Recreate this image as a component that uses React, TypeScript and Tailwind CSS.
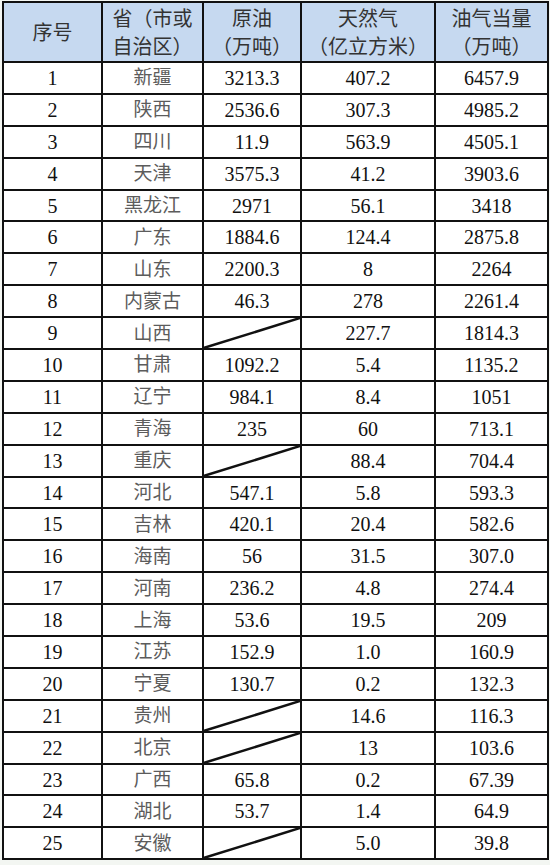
const rows: [string, string, string | null, string, string][] = [
  ['1', '新疆', '3213.3', '407.2', '6457.9'],
  ['2', '陕西', '2536.6', '307.3', '4985.2'],
  ['3', '四川', '11.9', '563.9', '4505.1'],
  ['4', '天津', '3575.3', '41.2', '3903.6'],
  ['5', '黑龙江', '2971', '56.1', '3418'],
  ['6', '广东', '1884.6', '124.4', '2875.8'],
  ['7', '山东', '2200.3', '8', '2264'],
  ['8', '内蒙古', '46.3', '278', '2261.4'],
  ['9', '山西', null, '227.7', '1814.3'],
  ['10', '甘肃', '1092.2', '5.4', '1135.2'],
  ['11', '辽宁', '984.1', '8.4', '1051'],
  ['12', '青海', '235', '60', '713.1'],
  ['13', '重庆', null, '88.4', '704.4'],
  ['14', '河北', '547.1', '5.8', '593.3'],
  ['15', '吉林', '420.1', '20.4', '582.6'],
  ['16', '海南', '56', '31.5', '307.0'],
  ['17', '河南', '236.2', '4.8', '274.4'],
  ['18', '上海', '53.6', '19.5', '209'],
  ['19', '江苏', '152.9', '1.0', '160.9'],
  ['20', '宁夏', '130.7', '0.2', '132.3'],
  ['21', '贵州', null, '14.6', '116.3'],
  ['22', '北京', null, '13', '103.6'],
  ['23', '广西', '65.8', '0.2', '67.39'],
  ['24', '湖北', '53.7', '1.4', '64.9'],
  ['25', '安徽', null, '5.0', '39.8'],
];

const num = 'font-["Liberation_Serif",serif] text-[20px] text-[#111]';
const cell = 'border-2 border-[#111] text-center p-0 leading-none';

export default function App() {
  return (
    <div className="w-[550px] h-[865px] bg-[#f3f6f2] pt-[1px] pl-[2px]">
      <table className="border-collapse table-fixed w-[545px]">
        <colgroup>
          <col className="w-[99px]" />
          <col className="w-[101px]" />
          <col className="w-[98px]" />
          <col className="w-[134px]" />
          <col className="w-[113px]" />
        </colgroup>
        <thead>
          <tr className="h-[60px] bg-[#c6d9f0] font-['Noto_Sans_CJK_SC',sans-serif] text-[20px] text-[#333] leading-[28px]">
            <th className={`${cell} font-normal`}>序号</th>
            <th className={`${cell} font-normal`}>
              <div className="leading-[28px]">省（市或</div>
              <div className="leading-[28px]">自治区）</div>
            </th>
            <th className={`${cell} font-normal`}>
              <div className="leading-[28px]">原油</div>
              <div className="leading-[28px]">（万吨）</div>
            </th>
            <th className={`${cell} font-normal`}>
              <div className="leading-[28px]">天然气</div>
              <div className="leading-[28px]">（亿立方米）</div>
            </th>
            <th className={`${cell} font-normal`}>
              <div className="leading-[28px]">油气当量</div>
              <div className="leading-[28px]">（万吨）</div>
            </th>
          </tr>
        </thead>
        <tbody className="bg-white">
          {rows.map(([no, name, oil, gas, total]) => (
            <tr key={no} className="h-[31.9px]">
              <td className={`${cell} ${num}`}>{no}</td>
              <td className={`${cell} font-["Liberation_Serif","Noto_Sans_CJK_SC",serif] font-normal text-[19px] text-[#5c5c5c]`}>
                {name}
              </td>
              <td className={`${cell} ${num} relative`}>
                {oil ?? (
                  <svg className="absolute inset-0 w-full h-full" viewBox="0 0 100 100" preserveAspectRatio="none">
                    <line x1="0" y1="100" x2="100" y2="0" stroke="#111" strokeWidth="2.5" vectorEffect="non-scaling-stroke" />
                  </svg>
                )}
              </td>
              <td className={`${cell} ${num}`}>{gas}</td>
              <td className={`${cell} ${num}`}>{total}</td>
            </tr>
          ))}
        </tbody>
      </table>
    </div>
  );
}
